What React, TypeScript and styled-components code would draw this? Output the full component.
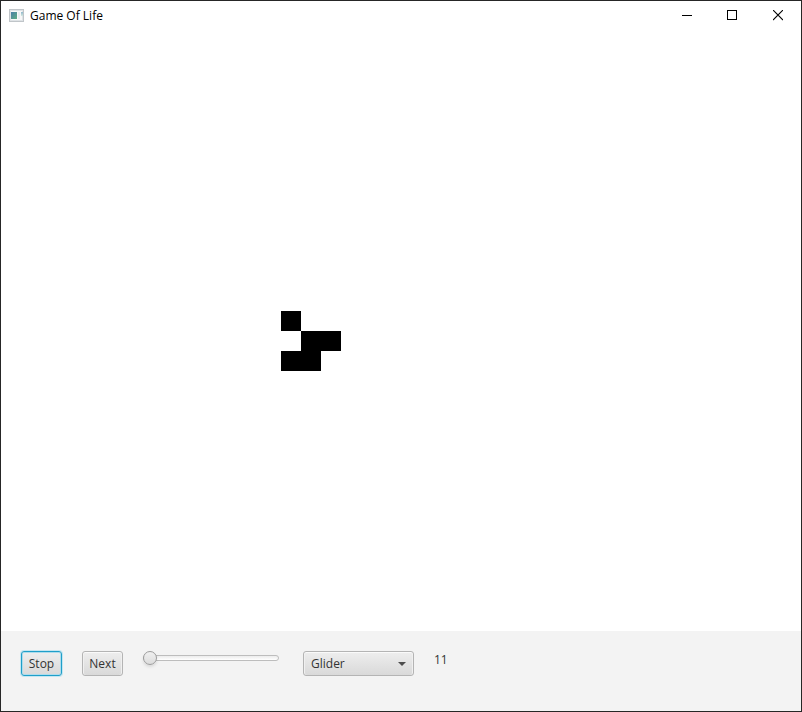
import React, { useState } from "react";
import styled, { createGlobalStyle, css } from "styled-components";

const GlobalStyle = createGlobalStyle`
  *, *::before, *::after {
    box-sizing: border-box;
  }
  body {
    margin: 0;
    font-family: "Open Sans", "Noto Sans", sans-serif;
    font-size: 12px;
    line-height: 16px;
    color: #333333;
  }
`;

const Window = styled.div`
  display: flex;
  flex-direction: column;
  min-height: 100vh;
  border: 1px solid #262626;
  background: #f3f3f3;
`;

const TitleBar = styled.header`
  display: flex;
  align-items: center;
  height: 30px;
  padding-left: 8px;
  background: #ffffff;
`;

const Title = styled.h1`
  flex: 1;
  margin: 0 0 0 6px;
  font-size: 12px;
  font-weight: 400;
  color: #000000;
`;

const CaptionButton = styled.button`
  display: flex;
  align-items: center;
  justify-content: center;
  width: 46px;
  height: 30px;
  padding: 0;
  border: 0;
  background: transparent;

  &:hover {
    background: #e5e5e5;
  }
`;

const Board = styled.svg`
  display: block;
  width: 100%;
  height: auto;
  background: #ffffff;
`;

const Controls = styled.footer`
  display: flex;
  align-items: flex-start;
  gap: 20px;
  padding: 20px;
`;

const raised = css`
  height: 25px;
  border: 1px solid #b4b4b4;
  border-radius: 3px;
  background: linear-gradient(#eeeeee, #d9d9d9);
  box-shadow: inset 0 1px 0 #fafafa, inset 1px 0 0 #f0f0f0, inset -1px 0 0 #f0f0f0;
  color: #333333;
  font: inherit;
`;

const PushButton = styled.button<{ $active?: boolean }>`
  ${raised}
  min-width: 41px;
  padding: 0 6px;
  ${(p) =>
    p.$active &&
    css`
      border-color: #1f9fc9;
      box-shadow: 0 0 0 1px #c4e6f1, inset 0 0 0 1px #aedcec;
    `}
`;

const SpeedSlider = styled.input`
  appearance: none;
  width: 140px;
  height: 14px;
  margin: 0;
  padding-right: 4px;
  background: transparent;

  &::-webkit-slider-runnable-track {
    height: 6px;
    border: 1px solid #bdbdbd;
    border-radius: 3px;
    background: linear-gradient(#ececec, #ffffff);
  }

  &::-webkit-slider-thumb {
    appearance: none;
    width: 14px;
    height: 14px;
    margin: -5px 0 0 -1px;
    border: 1px solid #9c9c9c;
    border-radius: 50%;
    background: linear-gradient(#f0f0f0, #dcdcdc);
    box-shadow: 0 2px 3px rgba(0, 0, 0, 0.1);
  }
`;

const PatternField = styled.div`
  display: grid;
  align-items: center;
  width: 111px;
`;

const PatternSelect = styled.select`
  ${raised}
  grid-area: 1 / 1;
  appearance: none;
  width: 100%;
  padding: 0 24px 0 7px;
`;

const PatternArrow = styled.svg`
  grid-area: 1 / 1;
  justify-self: end;
  margin-right: 8px;
  pointer-events: none;
`;

const Generation = styled.output`
  line-height: 18px;
`;

const CELL = 20;
const COLUMNS = 40;
const ROWS = 30;
const LIVE_CELLS: Array<[number, number]> = [
  [14, 14],
  [15, 15],
  [16, 15],
  [14, 16],
  [15, 16],
];

function AppIcon() {
  return (
    <svg width="15" height="15" viewBox="0 0 15 15" aria-hidden="true" shapeRendering="crispEdges">
      <defs>
        <linearGradient id="pane" x1="0" y1="0" x2="1" y2="1">
          <stop offset="0" stopColor="#4a7fa8" />
          <stop offset="1" stopColor="#5fae83" />
        </linearGradient>
        <linearGradient id="side" x1="0" y1="0" x2="0" y2="1">
          <stop offset="0" stopColor="#8fb8cc" />
          <stop offset="1" stopColor="#d4e8e0" />
        </linearGradient>
      </defs>
      <rect width="15" height="13" fill="#c0c5c9" />
      <rect x="1" y="1" width="13" height="11" fill="#dfe3e6" />
      <rect x="2" y="2" width="11" height="9" fill="#f7f8f8" />
      <rect x="2" y="3" width="6" height="7" fill="url(#pane)" />
      <rect x="9" y="3" width="2" height="7" fill="#e9edf0" />
      <rect x="12" y="3" width="2" height="4" fill="url(#side)" />
    </svg>
  );
}

export default function App() {
  const [speed, setSpeed] = useState(0);
  const [pattern, setPattern] = useState("Glider");

  return (
    <>
      <GlobalStyle />
      <Window>
        <TitleBar>
          <AppIcon />
          <Title>Game Of Life</Title>
          <CaptionButton aria-label="Minimize">
            <svg width="12" height="12" viewBox="0 0 12 12" shapeRendering="crispEdges">
              <rect x="2" y="5" width="10" height="1" fill="#000000" />
            </svg>
          </CaptionButton>
          <CaptionButton aria-label="Maximize">
            <svg width="10" height="12" viewBox="0 0 10 12">
              <rect x="0.5" y="0.5" width="9" height="9" fill="none" stroke="#000000" />
            </svg>
          </CaptionButton>
          <CaptionButton aria-label="Close">
            <svg width="10" height="12" viewBox="0 0 10 12">
              <path d="M0 0L10 10M10 0L0 10" stroke="#000000" strokeWidth="1.1" />
            </svg>
          </CaptionButton>
        </TitleBar>

        <Board
          viewBox={`0 0 ${COLUMNS * CELL} ${ROWS * CELL}`}
          shapeRendering="crispEdges"
          role="img"
          aria-label="Cell board"
        >
          {LIVE_CELLS.map(([column, row]) => (
            <rect
              key={`${column}-${row}`}
              x={column * CELL}
              y={row * CELL}
              width={CELL}
              height={CELL}
              fill="#000000"
            />
          ))}
        </Board>

        <Controls>
          <PushButton $active>Stop</PushButton>
          <PushButton>Next</PushButton>
          <SpeedSlider
            type="range"
            aria-label="Speed"
            min={0}
            max={100}
            value={speed}
            onChange={(e) => setSpeed(Number(e.target.value))}
          />
          <PatternField>
            <PatternSelect
              aria-label="Pattern"
              value={pattern}
              onChange={(e) => setPattern(e.target.value)}
            >
              <option>Glider</option>
            </PatternSelect>
            <PatternArrow width="8" height="4" viewBox="0 0 8 4" aria-hidden="true">
              <path d="M0 0H8L4 4Z" fill="#4d4d4d" />
            </PatternArrow>
          </PatternField>
          <Generation aria-label="Generation">11</Generation>
        </Controls>
      </Window>
    </>
  );
}
